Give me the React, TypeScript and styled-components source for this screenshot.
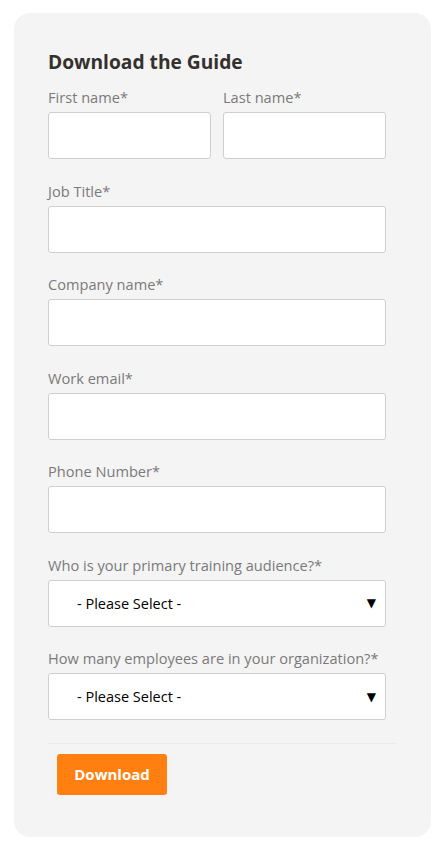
import React from "react";
import styled, { createGlobalStyle } from "styled-components";

const Global = createGlobalStyle`
  html, body { margin: 0; padding: 0; background: #ffffff; }
  body { font-family: "Open Sans", "Liberation Sans", sans-serif; }
  * { box-sizing: border-box; }
`;

const Page = styled.div`
  padding: 13px 15px 9px 14px;
`;

const Card = styled.form`
  width: 417px;
  background: #f4f4f4;
  border-radius: 16px;
  padding: 37px 34px 42px 34px;
  display: flex;
  flex-direction: column;
`;

const Title = styled.h2`
  margin: 0 0 12px 0;
  font-size: 19.2px;
  line-height: 24px;
  font-weight: 700;
  color: #33302e;
`;

const Row = styled.div`
  display: grid;
  grid-template-columns: 163px 163px;
  column-gap: 12px;
  width: 338px;
`;

const Field = styled.div`
  display: flex;
  flex-direction: column;
  margin-bottom: 20.5px;
`;

const Label = styled.label`
  font-size: 14.6px;
  line-height: 22px;
  color: #7a7a7a;
  margin-bottom: 4px;
  white-space: nowrap;
`;

const Input = styled.input<{ $w?: number }>`
  height: 47px;
  width: ${(p) => (p.$w ? `${p.$w}px` : "338px")};
  background: #ffffff;
  border: 1px solid #cfcfcf;
  border-radius: 3px;
  outline: none;
  font-family: inherit;
  font-size: 15px;
  padding: 0 10px;
`;

const SelectBox = styled.div`
  position: relative;
  height: 47px;
  width: 338px;
  background: #ffffff;
  border: 1px solid #cfcfcf;
  border-radius: 3px;
  display: flex;
  align-items: center;
  padding-left: 28px;
  font-size: 14.5px;
  color: #000000;
`;

const Arrow = styled.span`
  position: absolute;
  right: 9px;
  top: 50%;
  transform: translateY(-50%);
  font-size: 12px;
  font-family: "DejaVu Sans", sans-serif;
  color: #000;
`;

const Divider = styled.hr`
  margin: 2px 0 10px 0;
  width: 349px;
  border: 0;
  border-top: 1px solid #ebebeb;
`;

const Button = styled.button`
  margin-left: 9px;
  width: 110px;
  height: 41px;
  background: #ff7f11;
  color: #ffffff;
  border: 0;
  border-radius: 3px;
  font-family: "Open Sans", "Liberation Sans", sans-serif;
  font-weight: 700;
  font-size: 15px;
  align-self: flex-start;
`;

const TextField = ({ label, w }: { label: string; w?: number }) => (
  <Field>
    <Label>{label}</Label>
    <Input $w={w} type="text" />
  </Field>
);

const SelectField = ({ label }: { label: string }) => (
  <Field>
    <Label>{label}</Label>
    <SelectBox>
      - Please Select -
      <Arrow>▼</Arrow>
    </SelectBox>
  </Field>
);

export default function App() {
  return (
    <>
      <Global />
      <Page>
        <Card onSubmit={(e) => e.preventDefault()}>
          <Title>Download the Guide</Title>
          <Row>
            <TextField label="First name*" w={163} />
            <TextField label="Last name*" w={163} />
          </Row>
          <TextField label="Job Title*" />
          <TextField label="Company name*" />
          <TextField label="Work email*" />
          <TextField label="Phone Number*" />
          <SelectField label="Who is your primary training audience?*" />
          <SelectField label="How many employees are in your organization?*" />
          <Divider />
          <Button type="submit">Download</Button>
        </Card>
      </Page>
    </>
  );
}
